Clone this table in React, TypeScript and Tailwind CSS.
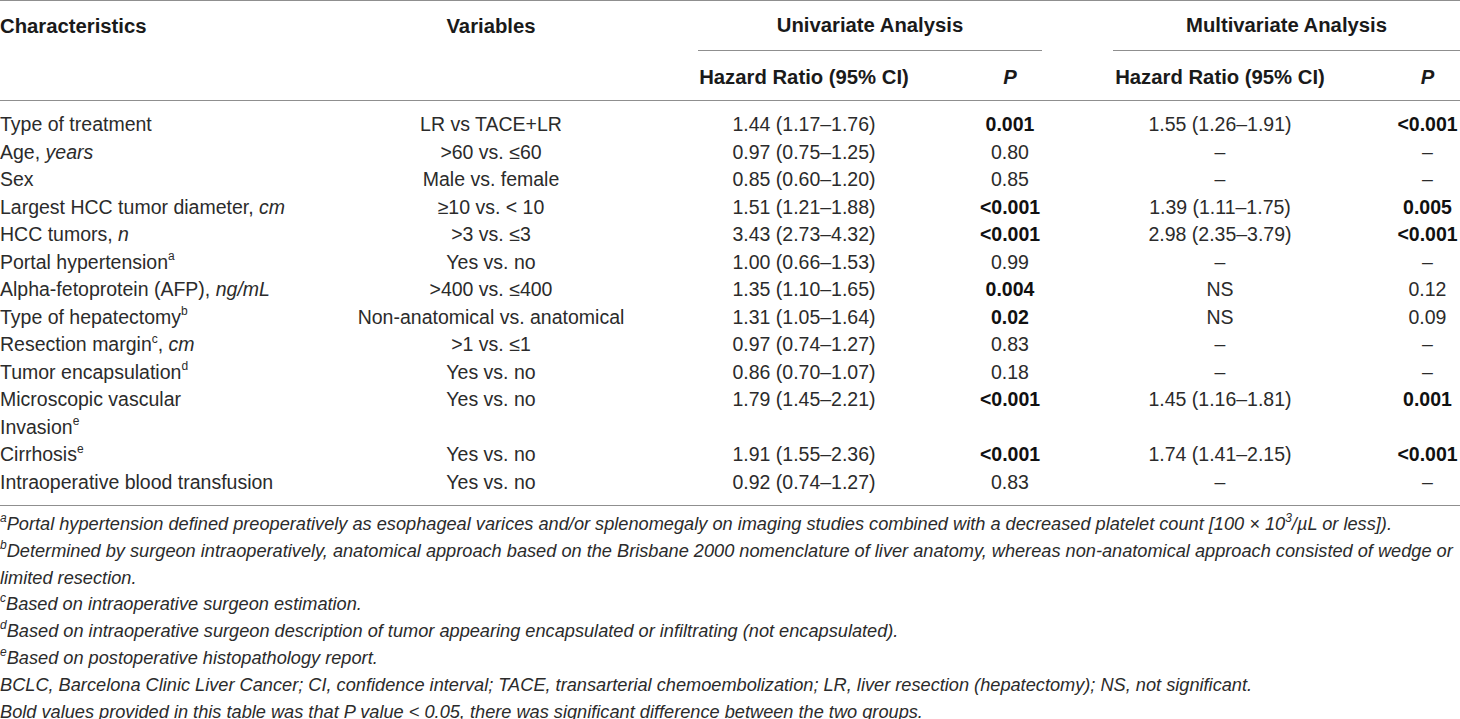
const cols = "grid grid-cols-[345px_292px_334px_78px_342px_69px]";

type Row = {
  label: React.ReactNode;
  variable: string;
  uHr: string;
  uP: string;
  uBold?: boolean;
  mHr: string;
  mP: string;
  mBold?: boolean;
};

const Sup = ({ children }: { children: React.ReactNode }) => (
  <sup className="relative -top-[1px] align-super text-[12px] leading-none">{children}</sup>
);

const rows: Row[] = [
  { label: "Type of treatment", variable: "LR vs TACE+LR", uHr: "1.44 (1.17–1.76)", uP: "0.001", uBold: true, mHr: "1.55 (1.26–1.91)", mP: "<0.001", mBold: true },
  { label: <>Age, <i>years</i></>, variable: ">60 vs. ≤60", uHr: "0.97 (0.75–1.25)", uP: "0.80", mHr: "–", mP: "–" },
  { label: "Sex", variable: "Male vs. female", uHr: "0.85 (0.60–1.20)", uP: "0.85", mHr: "–", mP: "–" },
  { label: <>Largest HCC tumor diameter, <i>cm</i></>, variable: "≥10 vs. < 10", uHr: "1.51 (1.21–1.88)", uP: "<0.001", uBold: true, mHr: "1.39 (1.11–1.75)", mP: "0.005", mBold: true },
  { label: <>HCC tumors, <i>n</i></>, variable: ">3 vs. ≤3", uHr: "3.43 (2.73–4.32)", uP: "<0.001", uBold: true, mHr: "2.98 (2.35–3.79)", mP: "<0.001", mBold: true },
  { label: <>Portal hypertension<Sup>a</Sup></>, variable: "Yes vs. no", uHr: "1.00 (0.66–1.53)", uP: "0.99", mHr: "–", mP: "–" },
  { label: <>Alpha-fetoprotein (AFP), <i>ng/mL</i></>, variable: ">400 vs. ≤400", uHr: "1.35 (1.10–1.65)", uP: "0.004", uBold: true, mHr: "NS", mP: "0.12" },
  { label: <>Type of hepatectomy<Sup>b</Sup></>, variable: "Non-anatomical vs. anatomical", uHr: "1.31 (1.05–1.64)", uP: "0.02", uBold: true, mHr: "NS", mP: "0.09" },
  { label: <>Resection margin<Sup>c</Sup>, <i>cm</i></>, variable: ">1 vs. ≤1", uHr: "0.97 (0.74–1.27)", uP: "0.83", mHr: "–", mP: "–" },
  { label: <>Tumor encapsulation<Sup>d</Sup></>, variable: "Yes vs. no", uHr: "0.86 (0.70–1.07)", uP: "0.18", mHr: "–", mP: "–" },
  { label: <>Microscopic vascular<br />Invasion<Sup>e</Sup></>, variable: "Yes vs. no", uHr: "1.79 (1.45–2.21)", uP: "<0.001", uBold: true, mHr: "1.45 (1.16–1.81)", mP: "0.001", mBold: true },
  { label: <>Cirrhosis<Sup>e</Sup></>, variable: "Yes vs. no", uHr: "1.91 (1.55–2.36)", uP: "<0.001", uBold: true, mHr: "1.74 (1.41–2.15)", mP: "<0.001", mBold: true },
  { label: "Intraoperative blood transfusion", variable: "Yes vs. no", uHr: "0.92 (0.74–1.27)", uP: "0.83", mHr: "–", mP: "–" },
];

export default function App() {
  return (
    <div className="w-[1460px] bg-white font-['Liberation_Sans',Arial,sans-serif] text-[#2b2b2b]">
      <div className="border-t border-[#8f8f8f]">
        {/* header */}
        <div className={`${cols} h-[50px] items-center text-[20.3px] font-bold text-[#1a1a1a]`}>
          <div className="pt-[1px]">Characteristics</div>
          <div className="pt-[1px] text-center">Variables</div>
          <div className="col-span-2 ml-[61px] mr-[7px] flex h-full items-center justify-center border-b border-[#8f8f8f] pl-[0px]">
            Univariate Analysis
          </div>
          <div className="col-span-2 ml-[64px] flex h-full items-center justify-center border-b border-[#8f8f8f]">
            Multivariate Analysis
          </div>
        </div>
        <div className={`${cols} h-[50px] items-center border-b border-[#8f8f8f] pt-[3px] text-[20.3px] font-bold text-[#1a1a1a]`}>
          <div />
          <div />
          <div className="text-center">Hazard Ratio (95% CI)</div>
          <div className="text-center italic">P</div>
          <div className="text-center">Hazard Ratio (95% CI)</div>
          <div className="pl-[4px] text-center italic">P</div>
        </div>

        {/* body */}
        <div className="border-b border-[#8f8f8f] pb-[9px] pt-[10px] text-[19.5px] leading-[27.5px]">
          {rows.map((r, i) => (
            <div key={i} className={cols}>
              <div className="whitespace-nowrap">{r.label}</div>
              <div className="text-center whitespace-nowrap">{r.variable}</div>
              <div className="text-center">{r.uHr}</div>
              <div className={`text-center ${r.uBold ? "font-bold text-[#111]" : ""}`}>{r.uP}</div>
              <div className="text-center">{r.mHr}</div>
              <div className={`pl-[4px] text-center whitespace-nowrap ${r.mBold ? "font-bold text-[#111]" : ""}`}>{r.mP}</div>
            </div>
          ))}
        </div>

        {/* footnotes */}
        <div className="pt-[5px] text-[18.2px] italic leading-[26.8px]">
          <p className="whitespace-nowrap">
            <Sup>a</Sup>Portal hypertension defined preoperatively as esophageal varices and/or splenomegaly on imaging studies combined with a decreased platelet count [100 × 10<Sup>3</Sup>/µL or less]).
          </p>
          <p className="whitespace-nowrap">
            <Sup>b</Sup>Determined by surgeon intraoperatively, anatomical approach based on the Brisbane 2000 nomenclature of liver anatomy, whereas non-anatomical approach consisted of wedge or
            <br />
            limited resection.
          </p>
          <p>
            <Sup>c</Sup>Based on intraoperative surgeon estimation.
          </p>
          <p>
            <Sup>d</Sup>Based on intraoperative surgeon description of tumor appearing encapsulated or infiltrating (not encapsulated).
          </p>
          <p>
            <Sup>e</Sup>Based on postoperative histopathology report.
          </p>
          <p>BCLC, Barcelona Clinic Liver Cancer; CI, confidence interval; TACE, transarterial chemoembolization; LR, liver resection (hepatectomy); NS, not significant.</p>
          <p>Bold values provided in this table was that P value &lt; 0.05, there was significant difference between the two groups.</p>
        </div>
      </div>
    </div>
  );
}
